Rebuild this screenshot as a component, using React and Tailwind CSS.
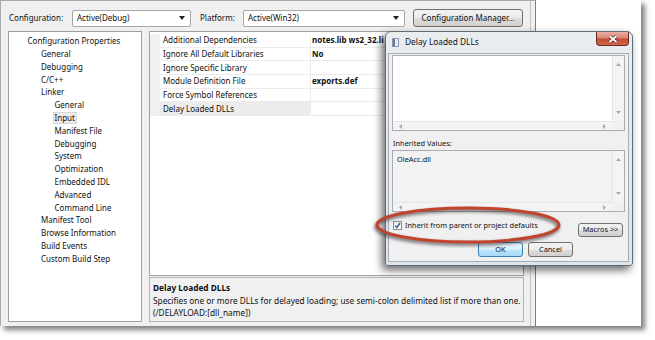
import React from "react";

const tree = [
  { label: "Configuration Properties", level: 0 },
  { label: "General", level: 1 },
  { label: "Debugging", level: 1 },
  { label: "C/C++", level: 1 },
  { label: "Linker", level: 1 },
  { label: "General", level: 2 },
  { label: "Input", level: 2, selected: true },
  { label: "Manifest File", level: 2 },
  { label: "Debugging", level: 2 },
  { label: "System", level: 2 },
  { label: "Optimization", level: 2 },
  { label: "Embedded IDL", level: 2 },
  { label: "Advanced", level: 2 },
  { label: "Command Line", level: 2 },
  { label: "Manifest Tool", level: 1 },
  { label: "Browse Information", level: 1 },
  { label: "Build Events", level: 1 },
  { label: "Custom Build Step", level: 1 },
];

const indent = ["pl-[16.5px]", "pl-[30px]", "pl-[43.5px]"];

// the first value is cut where the dialog covers it
const props = [
  { name: "Additional Dependencies", value: "notes.lib ws2_32.lib" },
  { name: "Ignore All Default Libraries", value: "No" },
  { name: "Ignore Specific Library", value: "" },
  { name: "Module Definition File", value: "exports.def" },
  { name: "Force Symbol References", value: "" },
  { name: "Delay Loaded DLLs", value: "", selected: true },
];

const Arrow = ({ dir }) => {
  const pts = {
    up: "0,3 2.5,0 5,3",
    down: "0,0 2.5,3 5,0",
    left: "3,0 0,2.5 3,5",
    right: "0,0 3,2.5 0,5",
  }[dir];
  const vertical = dir === "up" || dir === "down";
  return (
    <svg
      width={vertical ? 5 : 3}
      height={vertical ? 3 : 5}
      viewBox={vertical ? "0 0 5 3" : "0 0 3 5"}
    >
      <polygon points={pts} fill="#a8a8a8" />
    </svg>
  );
};

const ListBox = ({ className, children }) => (
  <div className={`flex flex-col border border-[#abadb3] ${className}`}>
    <div className="flex flex-1 min-h-0">
      <div className="flex-1 px-[4px] pt-[2px] leading-[12px]">{children}</div>
      <div className="w-[12px] flex flex-col items-center justify-between py-[7px] bg-[#f4f4f4] border-l border-[#e6e6e6]">
        <Arrow dir="up" />
        <Arrow dir="down" />
      </div>
    </div>
    <div className="h-[9px] flex">
      <div className="flex-1 flex items-center justify-between px-[6px] bg-[#f4f4f4] border-t border-[#e6e6e6]">
        <Arrow dir="left" />
        <Arrow dir="right" />
      </div>
      <div className="w-[12px] bg-[#f0f0f0]" />
    </div>
  </div>
);

const Combo = ({ label, width }) => (
  <div
    className={`${width} h-[17px] flex items-center justify-between pl-[4px] pr-[5px] bg-white border border-[#a7a7a7] rounded-[2px]`}
  >
    <span>{label}</span>
    <svg width="6" height="4" viewBox="0 0 6 4">
      <polygon points="0,0 6,0 3,4" fill="#222" />
    </svg>
  </div>
);

const WinButton = ({ children, className, primary }) => (
  <div
    className={`flex items-center justify-center rounded-[3px] border ${
      primary
        ? "border-[#3c7fb1] bg-[linear-gradient(#eaf6fd_0%,#d9f0fc_50%,#bee6fd_51%,#a7d9f5_100%)]"
        : "border-[#707070] bg-[linear-gradient(#f2f2f2_0%,#ebebeb_50%,#dddddd_51%,#cfcfcf_100%)]"
    } ${className}`}
  >
    {children}
  </div>
);

export default function App() {
  return (
    <div className="relative w-[655px] h-[340px] bg-white overflow-hidden font-['Noto_Sans',sans-serif] text-[8px] text-[#111]">
      {/* captured screenshot frame */}
      <div className="w-[641px] h-[326px] bg-white shadow-[4px_4px_5px_rgba(0,0,0,0.5)] flex">
        <div className="w-[536px] h-full bg-[#f0f0f0] border-t border-l border-r border-t-[#a9a9a9] border-l-[#a9a9a9] border-r-[#7d7d7d] shadow-[inset_-4px_0_0_#f0f0f0,inset_-5px_0_0_#c2c2c2] flex flex-col">
          {/* top bar */}
          <div className="flex items-center h-[18px] mt-[8px] pl-[8px]">
            <span className="w-[63px]">Configuration:</span>
            <Combo label="Active(Debug)" width="w-[119px]" />
            <span className="w-[43px] ml-[9px]">Platform:</span>
            <Combo label="Active(Win32)" width="w-[162px]" />
            <WinButton className="ml-[8px] w-[110px] h-[18px]">
              Configuration Manager...
            </WinButton>
          </div>

          {/* panels */}
          <div className="flex mt-[4px] ml-[7px] h-[291px] gap-[7px]">
            <div className="w-[134px] h-full bg-white border border-[#a0a0a0] pt-[2.6px]">
              {tree.map((item, i) => (
                <div
                  key={i}
                  className={`h-[12.8px] flex items-center ${indent[item.level]}`}
                >
                  <span
                    className={`px-[2px] leading-[11.5px] ${
                      item.selected
                        ? "bg-[#ececec] shadow-[inset_0_0_0_1px_#d6d6d6]"
                        : ""
                    }`}
                  >
                    {item.label}
                  </span>
                </div>
              ))}
            </div>

            <div className="w-[375px] flex flex-col">
              <div className="h-[245px] bg-white border border-[#a0a0a0] pt-[2px] overflow-hidden">
                {props.map((p, i) => (
                  <div
                    key={i}
                    className="h-[13.67px] flex border-b border-[#ececec]"
                  >
                    <div className="w-[10px] bg-[#f0f0f0]" />
                    <div
                      className={`w-[151px] flex items-center pl-[3px] border-r border-[#ececec] ${
                        p.selected ? "bg-[#ececec]" : ""
                      }`}
                    >
                      {p.name}
                    </div>
                    <div className="flex-1 flex items-center pl-[1px] font-bold">
                      <span className="w-[72px] whitespace-nowrap overflow-hidden">
                        {p.value}
                      </span>
                    </div>
                  </div>
                ))}
              </div>
              <div className="mt-[1px] h-[45px] bg-[#f0f0f0] border border-[#b4b4b4] pl-[3px] pt-[4px] leading-[12.5px] text-[8.3px]">
                <div className="font-bold">Delay Loaded DLLs</div>
                <div>
                  Specifies one or more DLLs for delayed loading; use semi-colon
                  delimited list if more than one.
                </div>
                <div>(/DELAYLOAD:[dll_name])</div>
              </div>
            </div>
          </div>
        </div>
      </div>

      {/* Delay Loaded DLLs dialog */}
      <div className="absolute left-[385px] top-[31px] w-[248px] h-[235px] flex flex-col rounded-t-[6px] rounded-b-[3px] border border-[#5f6d7b] bg-[linear-gradient(#eaedf0,#dfe4e9)] shadow-[-3px_4px_8px_rgba(0,0,0,0.6)] text-[7.4px]">
        <div className="relative h-[21px] flex items-center pl-[6px]">
          <div className="w-[7px] h-[9px] border border-[#8a98a8] bg-[linear-gradient(90deg,#5b7ea8_0,#5b7ea8_2px,#e8eef4_2px)]" />
          <span className="ml-[6px] text-[8.3px]">Delay Loaded DLLs</span>
          <div className="absolute right-[3px] top-[0px] w-[33px] h-[14px] rounded-b-[4px] border border-[#6b2a20] border-t-0 bg-[linear-gradient(#eab1a3_0%,#d98775_45%,#c44a33_55%,#d2674c_100%)] flex items-center justify-center">
            <svg width="10" height="8" viewBox="0 0 10 8">
              <path d="M1.5 1 L8.5 7 M8.5 1 L1.5 7" stroke="#5a2a22" strokeWidth="3.2" />
              <path d="M1.5 1 L8.5 7 M8.5 1 L1.5 7" stroke="#ffffff" strokeWidth="1.8" />
            </svg>
          </div>
        </div>

        <div className="flex-1 ml-[2px] mr-[3px] mb-[3px] bg-[#f0f0f0] border border-[#a3adb8] pt-[1px] px-[3px] flex flex-col">
          <ListBox className="h-[76px] bg-white" />
          <div className="h-[19px] pt-[6px] pl-[1px] leading-[12px]">Inherited Values:</div>
          <ListBox className="h-[62px] bg-[#f2f2f2]">OleAcc.dll</ListBox>

          <div className="flex justify-between mt-[9px]">
            <div className="flex items-center h-[9px] pl-[1px]">
              <div className="w-[9px] h-[9px] border border-[#8e8f8f] bg-[linear-gradient(#e9e9e9,#fdfdfd)] flex items-center justify-center">
                <svg width="7" height="7" viewBox="0 0 7 7">
                  <path d="M1 3.6 L2.8 5.6 L6 1" stroke="#3b5a8c" strokeWidth="1.4" fill="none" />
                </svg>
              </div>
              <span className="ml-[3px]">Inherit from parent or project defaults</span>
            </div>
            <WinButton className="mt-[2px] mr-[2px] w-[45px] h-[14px]">Macros &gt;&gt;</WinButton>
          </div>

          <div className="flex justify-end gap-[5px] mt-[5px] mr-[52px]">
            <WinButton primary className="w-[45px] h-[15px]">OK</WinButton>
            <WinButton className="w-[45px] h-[15px]">Cancel</WinButton>
          </div>
        </div>
      </div>

      {/* annotation ellipse */}
      <svg className="absolute left-0 top-0 pointer-events-none" width="655" height="340">
        <defs>
          <filter id="blur" x="-20%" y="-50%" width="140%" height="200%">
            <feGaussianBlur stdDeviation="1.6" />
          </filter>
        </defs>
        <ellipse cx="467" cy="227" rx="91" ry="17" fill="none" stroke="rgba(40,40,40,0.55)" strokeWidth="4" filter="url(#blur)" />
        <ellipse cx="468" cy="225" rx="91" ry="17" fill="none" stroke="#c2432d" strokeWidth="3" />
      </svg>
    </div>
  );
}
